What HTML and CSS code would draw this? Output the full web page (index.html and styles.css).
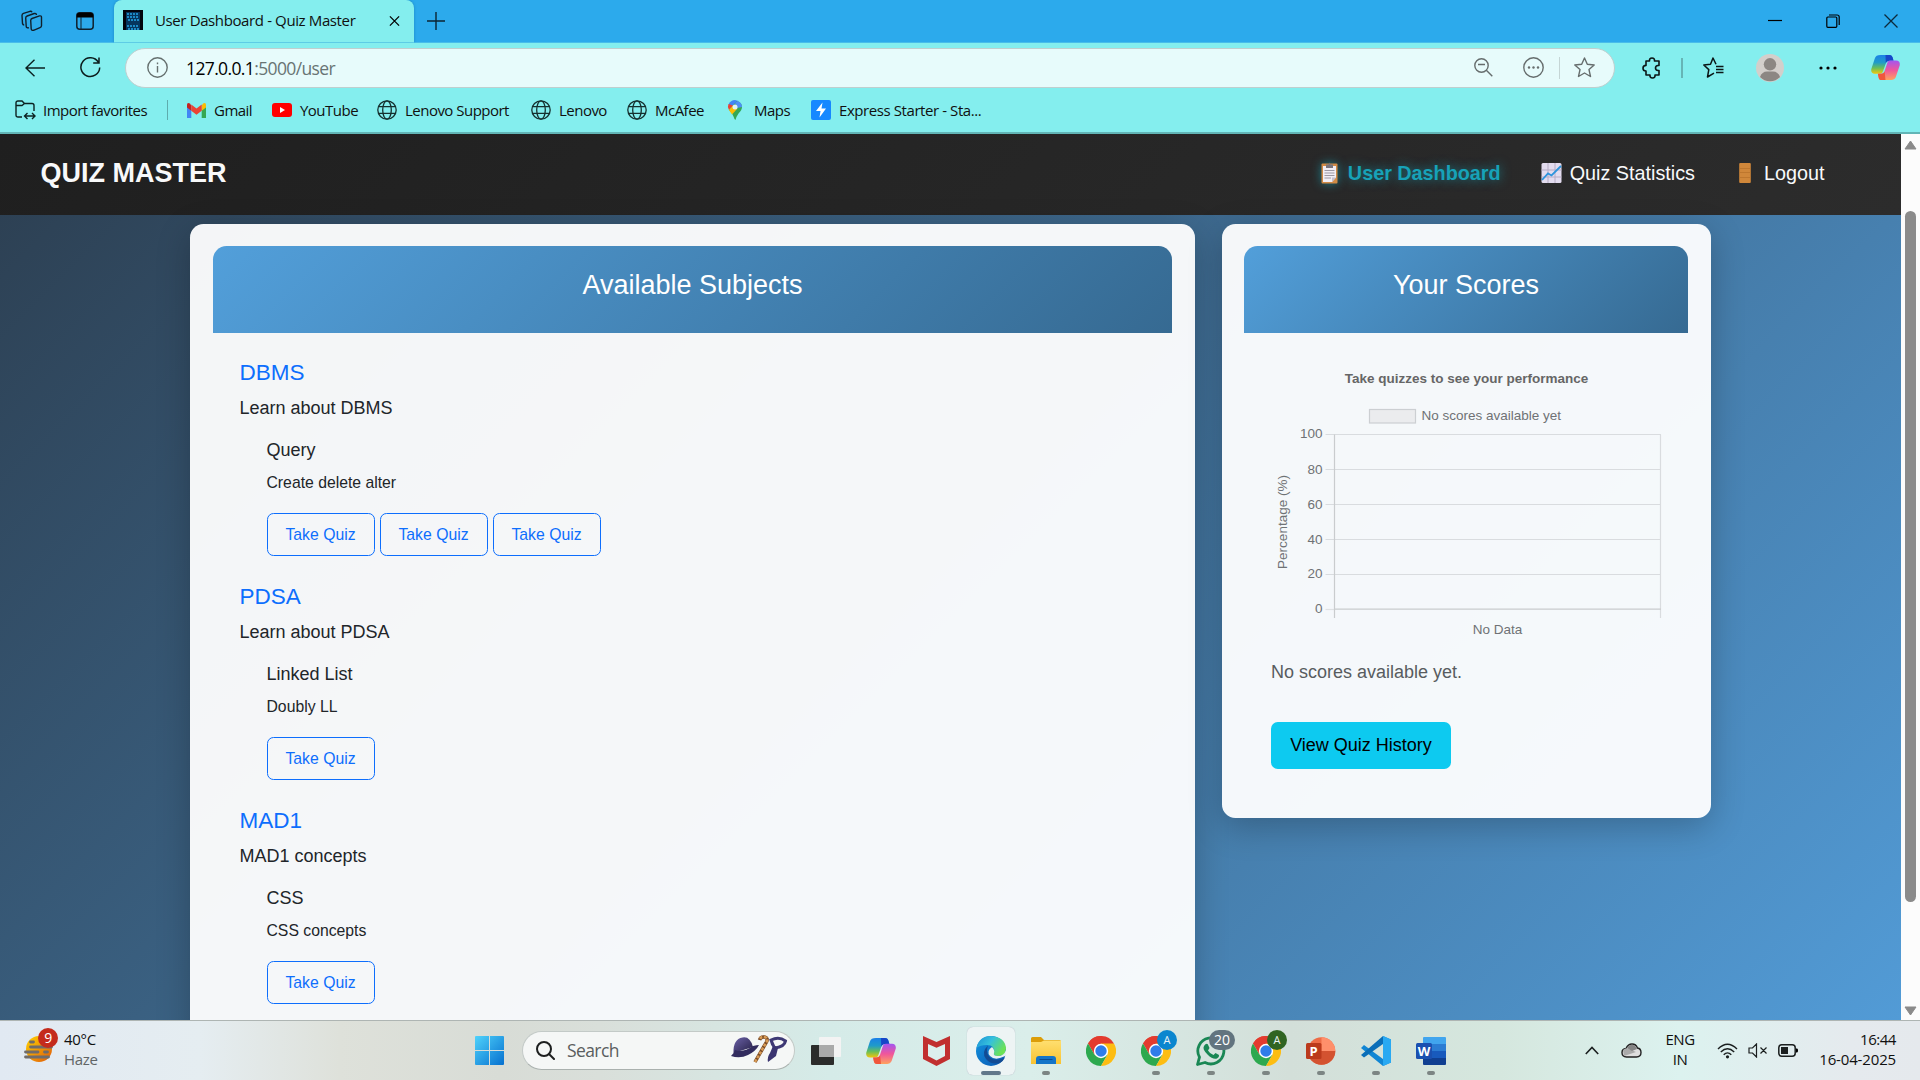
FILE: index.html
```html
<!DOCTYPE html>
<html lang="en">
<head>
<meta charset="utf-8">
<title>User Dashboard - Quiz Master</title>
<link rel="stylesheet" href="styles.css">
</head>
<body>
<svg class="defs" width="0" height="0">
  <defs>
    <linearGradient id="cpA" x1="0" y1="0" x2="0" y2="1"><stop offset="0" stop-color="#1a7fe8"/><stop offset=".4" stop-color="#1f9bc9"/><stop offset=".7" stop-color="#6abf58"/><stop offset="1" stop-color="#f4c60b"/></linearGradient>
    <linearGradient id="cpB" x1="0" y1="0" x2="0" y2="1"><stop offset="0" stop-color="#a356f0"/><stop offset=".5" stop-color="#f0569b"/><stop offset="1" stop-color="#ffa35e"/></linearGradient>
    <linearGradient id="win" x1="0" y1="0" x2="1" y2="1"><stop offset="0" stop-color="#4fd2fb"/><stop offset="1" stop-color="#0670cf"/></linearGradient>
    <linearGradient id="haze" x1="0" y1="0" x2="1" y2="1"><stop offset="0" stop-color="#ffd400"/><stop offset="1" stop-color="#e0590b"/></linearGradient>
    <linearGradient id="edgeTop" x1="0" y1="0" x2="1" y2=".5"><stop offset="0" stop-color="#1b8fd6"/><stop offset=".5" stop-color="#35c1dc"/><stop offset="1" stop-color="#6be254"/></linearGradient>
    <linearGradient id="edgeLow" x1="0" y1="0" x2="1" y2="1"><stop offset="0" stop-color="#1395e0"/><stop offset="1" stop-color="#0a55b0"/></linearGradient>
    <linearGradient id="fold" x1="0" y1="0" x2="0" y2="1"><stop offset="0" stop-color="#ffdf70"/><stop offset="1" stop-color="#f9c331"/></linearGradient>
    <linearGradient id="hat" x1="0" y1="0" x2="1" y2="1"><stop offset="0" stop-color="#6c62a8"/><stop offset="1" stop-color="#241f45"/></linearGradient>
  </defs>
  <symbol id="globe" viewBox="0 0 20 20"><g fill="none" stroke="#15302f" stroke-width="1.300"><circle cx="10" cy="10" r="9.200"/><ellipse cx="10" cy="10" rx="4.300" ry="9.200"/><path d="M1.600 6.700h16.800M1.600 13.300h16.800"/></g></symbol>
  <symbol id="copilot" viewBox="0 0 30 28"><path d="M10 1h9c2 0 3 1 3.500 3l.8 3h-4.500c-2 0-3 1-3.600 3l-2.800 8c-.6 1.700-1.500 2.500-3.200 2.500H4C1 20.500-.3 18.500.3 15.500L3.800 4.800C4.700 2 6.500 1 10 1z" fill="url(#cpA)"/><path d="M15 1h4c2 0 3 1 3.500 3l.8 3h-4c-2.500 0-3.500 1.500-4 3z" fill="#1646c8"/><path d="M20 27h-9c-2 0-2.800-1-3.200-3l-.7-3.500h3c2.500 0 3.400-1 4-3l2.600-8c.6-2 1.600-2.700 3.300-2.700H26c3 0 4.300 2 3.700 5l-3.500 10.500C25.300 26 23.500 27 20 27z" fill="url(#cpB)"/><path d="M15 27h-4c-2 0-2.800-1-3.200-3l-.7-3.500h3c2.500 0 3.400-1 4-2.500z" fill="#f0563c"/></symbol>
  <symbol id="chrome" viewBox="0 0 30 30"><path d="M15 15 2 7.500A15 15 0 0 1 28 7.500z" fill="#e33b2e"/><path d="M15 15V0a15 15 0 0 0-13 7.500L8.500 18.700z" fill="#e33b2e"/><path d="M2 7.500A15 15 0 0 0 15 30l6.500-11.300L15 15l-6.500 3.700z" fill="#2da94f"/><path d="M28 7.500H15l6.500 11.200L15 30A15 15 0 0 0 28 7.500z" fill="#fdbd12"/><circle cx="15" cy="15" r="7.200" fill="#fff"/><circle cx="15" cy="15" r="5.700" fill="#2f7de9"/></symbol>
</svg>

<div class="tabstrip">
  <div class="tab-tools">
    <svg class="i-work" width="22" height="22" viewBox="0 0 22 22" fill="none" stroke="#10202c" stroke-width="1.400" stroke-linejoin="round"><path d="M11 8.500l7.500-2.600q2-.4 2 1.400v8.500q0 1.300-1.500 1.900l-6.500 2.600q-2 .5-2.300-1.300l-.5-8.500q0-1.500 1.300-2z"/><path d="M8 17.800q-2.500.5-2.800-1.500L4.700 8q0-1.500 1.500-2l7-2.500q2-.4 2.300 1.500"/><path d="M3.200 15q-1.400 0-1.700-1.500L1 5.500Q1 4 2.500 3.400L9 1.300q1.500-.3 2 .9"/></svg>
    <svg class="i-pane" width="18" height="18" viewBox="0 0 18 18"><rect x=".8" y=".8" width="16.400" height="16.400" rx="3" fill="none" stroke="#10202c" stroke-width="1.500"/><path d="M.8 5.500V3.500Q.8.8 3.500.8h11q2.700 0 2.700 2.700v2z"/><path d="M5 5v12" stroke="#10202c"/></svg>
  </div>
  <div class="tab">
    <svg width="20" height="20" viewBox="0 0 20 20"><rect width="20" height="20" fill="#02060d"/><rect x="3" y="2" width="14" height="18" fill="#06365d"/><g stroke="#24a8e8" stroke-width="1.500" stroke-dasharray="2 1"><path d="M4 4h12M4 7h11M5 10h11M4 16h12M5 19h12"/></g></svg>
    <span>User Dashboard - Quiz Master</span>
    <svg class="x" width="11" height="12" viewBox="0 0 12 12" stroke="#000" stroke-width="1.400"><path d="M1 1l10 10M11 1 1 11"/></svg>
  </div>
  <svg class="plus" width="18" height="18" viewBox="0 0 18 18" stroke="#0b2433" stroke-width="1.400"><path d="M9 0v18M0 9h18"/></svg>
  <div class="window-buttons">
    <svg width="14" height="14" viewBox="0 0 14 14" stroke="#000" stroke-width="1.200"><path d="M0 6.500h14"/></svg>
    <svg width="14" height="14" viewBox="0 0 14 14" fill="none" stroke="#000" stroke-width="1.200"><rect x=".8" y="3" width="10" height="10.300" rx="1"/><path d="M3 1h8q2.200 0 2.200 2v8"/></svg>
    <svg width="14" height="14" viewBox="0 0 14 14" stroke="#0c2a3b" stroke-width="1.300"><path d="M.5.500l13 13M13.500.500l-13 13"/></svg>
  </div>
</div>

<div class="toolbar">
  <svg class="back" width="20" height="18" viewBox="0 0 20 18" fill="none" stroke="#0b2020" stroke-width="1.400"><path d="M9.500.8 1 9l8.500 8.200M1 9h19"/></svg>
  <svg class="reload" width="21" height="21" viewBox="0 0 21 21" fill="none" stroke="#0b1c1c" stroke-width="1.500"><path d="M18.300 5.200a9.400 9.400 0 1 0 1.400 5.300M19 .5v5.500h-5.800"/></svg>
  <div class="address">
    <svg width="21" height="21" viewBox="0 0 21 21" fill="none" stroke="#66706f" stroke-width="1.400"><circle cx="10.500" cy="10.500" r="9.700"/><path d="M10.500 9v6.500M10.500 5.500v1.800"/></svg>
    <span class="url">127.0.0.1<i>:5000/user</i></span>
    <svg class="a1" width="19" height="19" viewBox="0 0 19 19" fill="none" stroke="#666d6d" stroke-width="1.400"><circle cx="7.500" cy="7.500" r="6.700"/><path d="M4 6.500h7M12.300 12.300l6 6"/></svg>
    <svg class="a2" width="21" height="21" viewBox="0 0 21 21" fill="none" stroke="#666d6d" stroke-width="1.400"><circle cx="10.500" cy="10.500" r="9.700"/><g fill="#666d6d" stroke="none"><circle cx="6" cy="10.500" r="1.200"/><circle cx="10.500" cy="10.500" r="1.200"/><circle cx="15" cy="10.500" r="1.200"/></g></svg>
    <b></b>
    <svg class="a3" width="21" height="21" viewBox="0 0 21 21" fill="none" stroke="#666d6d" stroke-width="1.400" stroke-linejoin="round"><path d="M10.500 1l2.800 6.300 6.900.700-5.200 4.600 1.500 6.900-6-3.500-6 3.500L6 12.600.8 8l6.900-.7z"/></svg>
  </div>
  <div class="tools">
    <svg class="t1" width="20" height="22" viewBox="0 0 20 22" fill="none" stroke="#0b1616" stroke-width="1.600" stroke-linejoin="round"><path d="M4 4h3.500q-.3-3 2.500-3t2.500 3H17v4.500h-1q-2.500.2-2.500 2.500t2.500 2.500h1V18h-4q.3 3-2.500 3T8 18H4v-4q-3 0-3-2.800t3-2.800z"/></svg>
    <b></b>
    <svg class="t2" width="22" height="21" viewBox="0 0 22 21" fill="none" stroke="#0b1616" stroke-width="1.500" stroke-linejoin="round"><path d="M13 7.300 10 1 7.500 7.300.8 8l5 4.600L4.500 20l6.500-3.800M13 9.500h7.500M13 12.500h7.500M13 15.500h7.500"/></svg>
    <svg class="t3" width="28" height="28" viewBox="0 0 28 28"><circle cx="14" cy="14" r="14" fill="#d3cfcb"/><circle cx="14" cy="10.300" r="6.200" fill="#8c8783"/><path d="M4 23q2-5.500 7-5.500h6q5 0 7 5.500a14 14 0 0 1-20 0z" fill="#8c8783"/></svg>
    <svg class="t4" width="18" height="4" viewBox="0 0 18 4"><circle cx="2" cy="2" r="1.600"/><circle cx="9" cy="2" r="1.600"/><circle cx="16" cy="2" r="1.600"/></svg>
    <svg class="t5" width="29" height="27"><use href="#copilot"/></svg>
  </div>
</div>

<div class="bookmarks">
  <div><svg width="21" height="20" viewBox="0 0 21 20" fill="none" stroke="#0c2221" stroke-width="1.400"><path d="M7 17H3q-2 0-2-2V3q0-2 2-2h4l2.500 2.500H17q2 0 2 2V11M1 5.500h6l2.500-2M10 16h9.500M12.500 13l-3 3 3 3M17 13l3 3-3 3"/></svg><span>Import favorites</span></div>
  <b></b>
  <div><svg width="19" height="15" viewBox="0 0 19 15"><path d="M0 2v13h4.300V6z" fill="#4285f4"/><path d="M19 2v13h-4.300V6z" fill="#34a853"/><path d="M14.700 2.700v5L19 4.500V2q0-3-3-1.500z" fill="#fbbc04"/><path d="M4.300 2.700v5L0 4.500V2Q0-1 3 .5z" fill="#c5221f"/><path d="M4.300 1.500l5.200 4 5.200-4v6.200l-5.200 4-5.200-4z" fill="#ea4335"/></svg><span>Gmail</span></div>
  <div><svg width="20" height="14" viewBox="0 0 20 14"><rect width="20" height="14" rx="3" fill="#f00"/><path d="M8 4l5 3-5 3z" fill="#fff"/></svg><span>YouTube</span></div>
  <div><svg width="20" height="20"><use href="#globe"/></svg><span>Lenovo Support</span></div>
  <div><svg width="20" height="20"><use href="#globe"/></svg><span>Lenovo</span></div>
  <div><svg width="20" height="20"><use href="#globe"/></svg><span>McAfee</span></div>
  <div><svg width="20" height="20" viewBox="0 0 20 20"><path d="M3.500 4.500Q5.500 0 10 0l3.500 1-6 7z" fill="#4285f4"/><path d="M3.500 4Q2 7 4 10l4-4.500z" fill="#ea4335"/><path d="M4 10l8-9q5 1.500 5 6 0 3-3.500 6.500Q11 17 10.500 20q-1 0-2-3.500T4 10z" fill="#34a853"/><path d="M4 10l4-4.500 4.500 3-5.500 6z" fill="#fbbc04"/><path d="M12.500 1Q17 2.500 17 7l-5 1-2-5z" fill="#4f8ff5"/><circle cx="10" cy="7" r="2.500" fill="#dff4f5"/></svg><span>Maps</span></div>
  <div><svg width="20" height="20" viewBox="0 0 20 20"><rect width="20" height="20" rx="2" fill="#1688ff"/><path d="M11.500 2.500 5 11h4.500l-1 6.500L15 8.500h-4.500z" fill="#fff"/></svg><span class="express">Express Starter - Sta...</span></div>
</div>

<div class="viewport">
  <div class="page">
    <nav>
      <div class="brand">QUIZ MASTER</div>
      <a class="active"><svg width="27" height="22" viewBox="0 0 27 22"><rect x="5.500" y="1.500" width="16" height="20" rx="1" fill="#d18a45"/><path d="M7 4h13v11.500L16 20H7z" fill="#f1eef5"/><path d="M20 15.500 16 20v-4.500z" fill="#c4bfce"/><path d="M10 2.500h2.500L13.500.5l1 2H17V6h-7z" fill="#77747c"/><path d="M8.500 8.500h10M8.500 11h10M8.500 13.500h10M8.500 16H15" stroke="#9c98a4"/></svg>User Dashboard</a>
      <a><svg width="27" height="22" viewBox="0 0 27 22"><rect x="3.500" y="1" width="20" height="20" rx="1.500" fill="#e3dcef"/><path d="M10 1v20M17 1v20M3.500 8h20M3.500 15h20" stroke="#b6acc5"/><path d="M4 18l6-6.500 3.500 2L23 4" fill="none" stroke="#2d94dc" stroke-width="1.800"/></svg>Quiz Statistics</a>
      <a><svg width="27" height="22" viewBox="0 0 27 22"><rect x="7.200" y="1" width="11.600" height="20" rx="1" fill="#d0873a"/><path d="M7.500 6.500h11M7.500 10.500h11M7.500 15.500h11" stroke="#b9742b" stroke-width=".8"/></svg>Logout</a>
    </nav>
    <main>
      <section class="card subjects">
        <h4>Available Subjects</h4>
        <div class="body">
          <article>
            <h5>DBMS</h5><p>Learn about DBMS</p>
            <div class="chapter"><h6>Query</h6><p>Create delete alter</p><div class="row"><a>Take Quiz</a><a>Take Quiz</a><a>Take Quiz</a></div></div>
          </article>
          <article>
            <h5>PDSA</h5><p>Learn about PDSA</p>
            <div class="chapter"><h6>Linked List</h6><p>Doubly LL</p><div class="row"><a>Take Quiz</a></div></div>
          </article>
          <article>
            <h5>MAD1</h5><p>MAD1 concepts</p>
            <div class="chapter"><h6>CSS</h6><p>CSS concepts</p><div class="row"><a>Take Quiz</a></div></div>
          </article>
        </div>
      </section>
      <section class="card scores">
        <h4>Your Scores</h4>
        <svg class="chart" width="444" height="308" viewBox="0 0 444 308">
          <text class="title" x="222.500" y="50" text-anchor="middle">Take quizzes to see your performance</text>
          <rect x="125.500" y="76.500" width="46" height="13.500" fill="#ebecee" stroke="#cccfd2" stroke-width="1.200"/>
          <text x="177.500" y="87">No scores available yet</text>
          <g stroke="#d9dcdf" stroke-width="1.200"><path d="M81.500 101.500H417M81.500 136.500H417M81.500 171.500H417M81.500 206.500H417M81.500 241.500H417M416.500 101.500V285"/></g>
          <g stroke="#c9ccce" stroke-width="1.200"><path d="M81.500 276.500H90" stroke="#dfe2e4"/><path d="M90.500 101.500V285M90 276.200H417"/></g>
          <g text-anchor="end"><text x="78.500" y="105">100</text><text x="78.500" y="140.500">80</text><text x="78.500" y="175.500">60</text><text x="78.500" y="210.500">40</text><text x="78.500" y="245">20</text><text x="78.500" y="280">0</text></g>
          <text x="253.500" y="301" text-anchor="middle">No Data</text>
          <text class="axis" transform="translate(43 189) rotate(-90)" text-anchor="middle">Percentage (%)</text>
        </svg>
        <p>No scores available yet.</p>
        <a class="history">View Quiz History</a>
      </section>
    </main>
  </div>
  <div class="scrollbar"><svg width="13" height="10" viewBox="0 0 13 10"><path d="M6.500 1 12 9H1z" fill="#8a8a8a" stroke="#8a8a8a" stroke-linejoin="round"/></svg><div class="thumb"></div><svg width="13" height="10" viewBox="0 0 13 10"><path d="M6.500 9 12 1H1z" fill="#8a8a8a" stroke="#8a8a8a" stroke-linejoin="round"/></svg></div>
</div>

<div class="taskbar">
  <div class="weather">
    <svg width="36" height="36" viewBox="0 0 36 36"><circle cx="16" cy="21" r="13" fill="url(#haze)"/><g stroke="#706c6a" stroke-width="2.800" stroke-linecap="round"><path d="M7.500 14h3M7.500 19h21M2.500 24H15M21.500 24h3M2.500 29h23"/></g><circle cx="25" cy="10" r="10" fill="#c42b1c"/><text x="25" y="15" text-anchor="middle" class="badge9">9</text></svg>
    <div>40°C<i>Haze</i></div>
  </div>
  <svg class="start" width="29" height="29" viewBox="0 0 29 29" fill="url(#win)"><path d="M1 0h13v14H0V1q0-1 1-1zM15 0h13q1 0 1 1v13H15zM0 15h14v14H1q-1 0-1-1zM15 15h14v13q0 1-1 1H15z"/></svg>
  <div class="search">
    <svg width="19" height="19" viewBox="0 0 19 19" fill="none" stroke="#1d1f1f" stroke-width="2"><circle cx="8" cy="8" r="7"/><path d="M13 13l5 5" stroke-linecap="round"/></svg>
    <span>Search</span>
    <svg width="57" height="32" viewBox="0 0 57 32"><path d="M2.500 19Q2 5 11.500 3.500 19 2 22 13z" fill="url(#hat)"/><path d="M0 22q3-2.500 4-6 8 3 18-4 4-1 6-1-3 6-11 10T0 22z" fill="#322c5e"/><path d="M24 28 35.500 8q2-4-2-5-4-.5-5 3" fill="none" stroke="#7a4b25" stroke-width="3.500"/><path d="M24 28 35.500 8q2-4-2-5-4-.5-5 3" fill="none" stroke="#d89b56" stroke-width="2.500" stroke-dasharray="3 1.500"/><path d="M40 6q8-4 14.500 1-1 6-11 7zM44 14q-3-3-4-8" fill="none" stroke="#3e3874" stroke-width="3"/><path d="M42 12l5 2-2 8-8 6q-1-5 2-9z" fill="#3a3470"/></svg>
  </div>
  <div class="apps">
    <div class="app"><svg width="30" height="28" viewBox="0 0 30 28"><rect y="8" width="23" height="20" rx="1" fill="#2b2c2b"/><rect x="8" width="22" height="20" rx="1" fill="#f3f3f3"/><path d="M8 8h15v12H8z" fill="#aaa"/></svg></div>
    <div class="app"><svg width="30" height="28"><use href="#copilot"/></svg></div>
    <div class="app"><svg width="27" height="30" viewBox="0 0 27 30"><path d="M0 0l13.500 6L27 0v23l-13.500 7L0 23z" fill="#c12f2f"/><path d="M5 8l8.500 3.800L22 8v12l-8.500 4.500L5 20z" fill="#dcefed"/></svg></div>
    <div class="app current"><svg width="30" height="30" viewBox="0 0 30 30"><circle cx="15" cy="15" r="15" fill="url(#edgeLow)"/><path d="M.5 12Q3 0 15 0q14 1 15 12 0 8-8 8-5 0-4-3 1-8-7-8Q4 9 .5 12z" fill="url(#edgeTop)"/><path d="M12 9.500Q5 16 10 23q5 6 14 4 3-1.500 5-5.500-10 5-16-1-3.500-5-1-11z" fill="#134c94"/><path d="M16 11q-6 4-2 9 5 5 14 .5l2-1V14q-2 6-8 6-5 0-4-3 1-3-2-6z" fill="#e9f1f1"/></svg><u></u></div>
    <div class="app run"><svg width="30" height="27" viewBox="0 0 30 27"><path d="M0 8V1.500Q0 0 1.500 0H10l3 3h15.500Q30 3 30 4.500V8z" fill="#dc9d09"/><path d="M0 5h10l3-1.500h17V27H0z" fill="url(#fold)"/><path d="M5 27v-5q0-3 3-3h14q3 0 3 3v5z" fill="#1475c8"/><path d="M8.500 22.500h13" stroke="#0b4c92"/></svg><u></u></div>
    <div class="app"><svg width="30" height="30"><use href="#chrome"/></svg></div>
    <div class="app run"><svg width="30" height="30"><use href="#chrome"/></svg><em class="blue">A</em><u></u></div>
    <div class="app run"><svg width="30" height="30" viewBox="0 0 30 30"><path d="M1.500 28.500l2-7.300A13 13 0 1 1 9 26.500z" fill="none" stroke="#198754" stroke-width="2.800" stroke-linejoin="round"/><path d="M8 10q2-3 3.800-1.800L13.500 12 12 14.500q2 3.500 5.500 4.500l2-2 3.500 2q.5 2-2 3.500Q17 24 11.500 18.500T8 10z" fill="#198754"/></svg><em class="count">20</em><u></u></div>
    <div class="app run"><svg width="30" height="30"><use href="#chrome"/></svg><em class="green">A</em><u></u></div>
    <div class="app run"><svg width="30" height="28" viewBox="0 0 30 28"><circle cx="15.500" cy="14" r="13.800" fill="#ed6c47"/><path d="M15.500.2A13.800 13.800 0 0 1 29.300 14H15.500z" fill="#ff8f6b"/><path d="M1.700 14h27.600a13.800 13.800 0 0 1-27.600 0z" fill="#d35230"/><rect y="6" width="15.500" height="16" rx="1.500" fill="#bb3a1c"/><text x="7.500" y="18.500" text-anchor="middle" class="letter">P</text></svg><u></u></div>
    <div class="app run"><svg width="30" height="30" viewBox="0 0 30 30"><path d="M22 0l8 3.500v23L22 30 0 12l3-3 19 14z" fill="#1186d4"/><path d="M22 0v8L3 21.500 0 19z" fill="#0a6eb8"/><path d="M22 0l8 3.500v23L22 30z" fill="#29a9f2"/></svg><u></u></div>
    <div class="app run"><svg width="30" height="28" viewBox="0 0 30 28"><path d="M8 0h21q1 0 1 1v6H7V1q0-1 1-1z" fill="#41a5ee"/><path d="M7 7h23v7H7z" fill="#2b7cd3"/><path d="M7 14h23v7H7z" fill="#185abd"/><path d="M7 21h23v6q0 1-1 1H8q-1 0-1-1z" fill="#103f91"/><rect y="6" width="16" height="16" rx="1.500" fill="#1a50b0"/><text x="8" y="18.500" text-anchor="middle" class="letter">W</text></svg><u></u></div>
  </div>
  <div class="tray">
    <svg class="s1" width="14" height="9" viewBox="0 0 14 9" fill="none" stroke="#1b1f1f" stroke-width="1.600"><path d="M.8 8 7 1.500 13.200 8"/></svg>
    <svg class="s2" width="21" height="15" viewBox="0 0 21 15"><path d="M5.500 14Q1 14 1 9.500 1 6 5 5.500 7 1 11 1q4 0 5.500 4 3.500.5 3.500 4.500 0 4.500-4.500 4.500z" fill="#dedede" stroke="#222" stroke-width="1.400"/><path d="M2 7q3-3 6-1l7 3-3 1-9 3z" fill="#aaa"/><path d="M6 5q2-3.300 5-3.300T16 6l-5 2z" fill="#858585"/></svg>
    <div class="lang">ENG<br>IN</div>
    <svg class="s3" width="21" height="16" viewBox="0 0 21 16" fill="none" stroke="#1b1f1f" stroke-width="1.400"><path d="M1 6q9.500-9.500 19 0M3.800 9q6.700-6.500 13.400 0M6.700 11.800q3.800-3.800 7.600 0"/><circle cx="10.500" cy="13.800" r="1.600" fill="#1b1f1f" stroke="none"/></svg>
    <svg class="s4" width="20" height="15" viewBox="0 0 20 15" fill="none" stroke="#1b1f1f" stroke-width="1.200"><path d="M1 5h3.500l4-4v13l-4-4H1zM12.500 4.500l6 6M18.500 4.500l-6 6"/></svg>
    <svg class="s5" width="21" height="13" viewBox="0 0 21 13"><rect x=".8" y=".8" width="16.400" height="11.400" rx="3" fill="none" stroke="#1b1f1f" stroke-width="1.500"/><rect x="3" y="3" width="7" height="7" fill="#1b1f1f"/><path d="M18 4.500h1q1 0 1 2t-1 2h-1z"/></svg>
    <div class="clock">16:44<br><span>16-04-2025</span></div>
  </div>
</div>
</body>
</html>
```
FILE: styles.css
```css
* { box-sizing: border-box; margin: 0; padding: 0; }
body { width: 1920px; height: 1080px; overflow: hidden; display: flex; flex-direction: column; font-family: "Open Sans", "Noto Sans", sans-serif; font-size: 15px; color: #101010; }
svg { display: block; flex: none; }
i { font-style: normal; }
.defs { position: absolute; }

.tabstrip { height: 43px; flex: none; display: flex; align-items: center; background: #2caaec; border-bottom: 1px solid #49bdea; }
.tab-tools { width: 114px; height: 42px; display: flex; align-items: center; padding-left: 21px; }
.i-pane { margin-left: 33px; }
.tab { width: 300px; height: 43px; display: flex; align-items: center; background: #84eeee; border-radius: 8px 8px 0 0; padding: 0 0 2px 9px; box-shadow: 0 0 3px #1b86c0; clip-path: inset(0 -3px 0 -3px); letter-spacing: -.38px; }
.tab span { width: 234px; padding-left: 12px; white-space: nowrap; }
.tab .x { margin: 2px 0 0 12px; }
.plus { margin-left: 13px; }
.window-buttons { margin-left: auto; padding-right: 22px; display: flex; gap: 44px; }

.toolbar { height: 49px; flex: none; background: #84eeee; display: flex; align-items: center; padding-left: 25px; }
.reload { margin-left: 35px; }
.address { width: 1490px; height: 40px; margin-left: 24px; background: #e7fbfb; border: 1px solid #bfcfcf; border-radius: 20px; display: flex; align-items: center; padding-left: 21px; }
.url { width: 1309px; padding-left: 18px; font-size: 17.5px; letter-spacing: -.63px; color: #000; white-space: nowrap; }
.url i { color: #687474; }
.a1 { margin-left: -3px; }
.a2 { margin-left: 30px; }
.address b { width: 1px; height: 22px; background: #c5d5d5; margin: 0 14px 0 15px; }
.tools { display: flex; align-items: center; padding-left: 27px; }
.tools b { width: 2px; height: 20px; background: #66b5b6; margin: 0 20px 0 19px; }
.t3 { margin-left: 31px; }
.t4 { margin-left: 35px; }
.t5 { margin-left: 34px; }

.bookmarks { height: 42px; flex: none; background: #84eeee; border-bottom: 2px solid #62b5b6; display: grid; grid-template-columns: 152px 20px 85px 105px 154px 96px 98px 86px 200px; padding: 0 0 4px 15px; align-items: center; letter-spacing: -.52px; white-space: nowrap; }
.bookmarks div { display: flex; align-items: center; gap: 8px; }
.bookmarks div:first-child { gap: 7px; }
.bookmarks div:nth-child(8) { gap: 9px; }
.bookmarks b { width: 1px; height: 20px; background: #5eacad; }
.express { letter-spacing: -.42px; }

.viewport { height: 886px; flex: none; display: flex; overflow: hidden; }
.page { width: 1901px; background: linear-gradient(135deg, #2c3e50, #529bd6); font-family: "Liberation Sans", Arial, sans-serif; font-size: 18px; line-height: 27px; color: #212529; overflow: hidden; }
nav { height: 81px; background: linear-gradient(135deg, #1f1f1f, #2c2c2c); display: flex; align-items: center; gap: 37px; padding: 0 76.500px 2.500px 40.500px; color: #f8f9fa; font-size: 19.800px; }
.brand { font-size: 27px; font-weight: bold; margin-right: auto; }
nav a { display: flex; align-items: center; gap: 5px; }
nav .active { color: #17a2b8; font-weight: bold; text-shadow: 0 0 11px rgba(23,162,184,.7); }
nav .active svg { filter: drop-shadow(0 0 5px rgba(23,162,184,.7)); }
main { display: flex; align-items: flex-start; gap: 27px; padding: 9px 0 0 190px; }
.card { background: rgba(255,255,255,.95); border-radius: 13.500px; padding: 22px 23px; box-shadow: 0 9px 34px rgba(0,0,0,.23); }
.subjects { width: 1005px; height: 900px; }
.scores { width: 489px; height: 594px; padding-left: 22px; }
h4 { height: 87px; border-radius: 13.500px 13.500px 0 0; background: linear-gradient(135deg, #529fda, #366a92); color: #fff; font-weight: 400; font-size: 27px; line-height: 32px; padding-top: 23px; text-align: center; }
.body { padding: 26px 26.500px; }
article { margin-bottom: 26.900px; }
h5 { font-size: 22.500px; line-height: 27px; font-weight: 400; color: #0d6efd; margin-bottom: 9.400px; }
.chapter { padding: 18px 0 0 27px; }
h6 { font-size: 18px; line-height: 21.600px; font-weight: 400; margin-bottom: 9px; }
.chapter p { font-size: 15.750px; line-height: 23.600px; margin-bottom: 18.400px; }
.row { display: flex; gap: 5px; }
.row a { width: 108px; height: 43px; border: 1px solid #0d6efd; border-radius: 6.500px; color: #0d6efd; font-size: 15.750px; line-height: 41px; text-align: center; }
.chart text { font-size: 13.500px; fill: #6f7275; }
.chart .title { font-weight: bold; fill: #666; }
.scores p { padding: 18px 0 0 27px; color: #585c60; }
.history { display: block; width: 180px; height: 47px; margin: 36px 0 0 27px; border-radius: 6.750px; background: #0dcaf0; color: #000; line-height: 46px; text-align: center; }
.scrollbar { width: 19px; background: #fcfcfc; display: flex; flex-direction: column; align-items: center; padding: 6px 0 4px; }
.thumb { width: 11px; height: 691px; border-radius: 6px; background: #8b8b8b; margin: 61px 0 auto; }

.taskbar { height: 60px; flex: none; border-top: 1px solid #aeb5b3; display: flex; align-items: center; background: linear-gradient(90deg, #e1e9f2 0, #e5edf1 200px, #dee1da 340px, #d8dcd6 500px, #d9dfda 600px, #d5ebe8 830px, #daeeea 1030px, #d3dfd9 1290px, #d5e7de 1500px, #dcf2ef 1680px, #e5eaee 1850px, #e5e9ed 1920px); }
.weather { width: 475px; display: flex; align-items: center; padding-left: 23px; letter-spacing: -.3px; line-height: 20px; }
.weather svg { margin-top: -9px; }
.weather div { padding: 0 0 4px 5px; }
.weather i { display: block; color: #606566; }
.badge9 { font: 14px "Open Sans", sans-serif; fill: #fff; }
.search { width: 273px; height: 39px; margin-left: 18px; border: 1px solid #c3cac7; border-bottom-color: #aab1ae; border-radius: 20px; background: #f5f7f6; display: flex; align-items: center; padding: 0 0 1px 13px; font-size: 17.500px; color: #5a5e5e; letter-spacing: -.6px; }
.search span { width: 176px; padding-left: 12px; }
.apps { display: flex; gap: 7px; margin-left: 7px; }
.app { width: 48px; height: 48px; display: flex; align-items: center; justify-content: center; position: relative; }
.current { background: #edf4f4; border-radius: 6px; box-shadow: 0 0 1px #aab; }
.app u { position: absolute; left: 20px; bottom: 0; width: 8px; height: 4px; border-radius: 2px; background: #7c8583; }
.current u { left: 14px; width: 20px; background: #61778a; }
.app em { position: absolute; left: 25px; top: 3px; width: 20px; height: 20px; border-radius: 10px; color: #eaf3f6; font: 11px/20px "Open Sans", sans-serif; text-align: center; }
.app .blue { background: #0a86cf; }
.app .green { background: #306422; }
.app .count { left: 22px; width: 26px; background: #62747f; font-size: 14px; color: #fff; }
.letter { font: bold 13px "Open Sans", sans-serif; fill: #fff; }
.tray { display: flex; align-items: center; margin-left: auto; padding-right: 24px; line-height: 20px; letter-spacing: -.45px; }
.s2 { margin-left: 22px; }
.lang { width: 60px; margin: 0 7px 0 8px; padding-bottom: 3px; text-align: center; }
.s4 { margin-left: 10px; }
.s5 { margin-left: 10px; }
.clock { width: 97px; padding-bottom: 4px; text-align: right; white-space: nowrap; }
.clock span { letter-spacing: -.15px; }
```
